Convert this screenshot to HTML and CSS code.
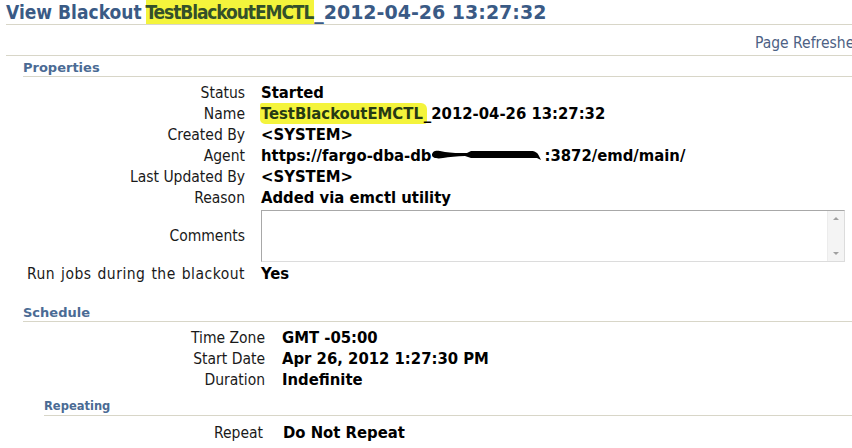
FILE: index.html
```html
<!DOCTYPE html>
<html>
<head>
<meta charset="utf-8">
<link rel="stylesheet" href="styles.css">
</head>
<body>
<div class="page">
  <h1 class="title">View Blackout <span class="hl">TestBlackoutEMCTL</span><span class="wide">_2012-04-26 13:27:32</span></h1>
  <div class="refresh-bar"><span class="refresh">Page Refreshed</span></div>

  <section class="section">
    <h2 class="sec-head">Properties</h2>
    <div class="grid props">
      <div class="lbl">Status</div><div class="val">Started</div>
      <div class="lbl">Name</div><div class="val"><span class="hl mark">TestBlackoutEMCTL</span>_2012-04-26 13:27:32</div>
      <div class="lbl">Created By</div><div class="val">&lt;SYSTEM&gt;</div>
      <div class="lbl">Agent</div><div class="val">https://fargo-dba-db<svg class="redact" width="113" height="14" viewBox="0 0 113 14"><path d="M1 7 C1 3 5 2 9 3 L14 4 C20 5 28 5 36 5 L40 3 L100 3 C104 3 107 5 108 8 L110 12 L106 10 L100 10 L40 10 L34 8 C26 8 18 9 12 10 C6 11 1 10 1 7 Z" fill="#000"/></svg>:3872/emd/main/</div>
      <div class="lbl">Last Updated By</div><div class="val">&lt;SYSTEM&gt;</div>
      <div class="lbl">Reason</div><div class="val">Added via emctl utility</div>
      <div class="lbl">Comments</div>
      <div class="val"><div class="textarea"><div class="scroll"><span class="arr up"></span><span class="arr down"></span></div></div></div>
      <div class="lbl lbl-long">Run jobs during the blackout</div><div class="val">Yes</div>
    </div>
  </section>

  <section class="section sched">
    <h2 class="sec-head">Schedule</h2>
    <div class="grid sched-grid">
      <div class="lbl">Time Zone</div><div class="val">GMT -05:00</div>
      <div class="lbl">Start Date</div><div class="val">Apr 26, 2012 1:27:30 PM</div>
      <div class="lbl">Duration</div><div class="val">Indefinite</div>
    </div>
    <section class="sub">
      <h3 class="sub-head">Repeating</h3>
      <div class="grid rep-grid">
        <div class="lbl">Repeat</div><div class="val">Do Not Repeat</div>
      </div>
    </section>
  </section>
</div>
</body>
</html>
```

FILE: styles.css
```css
html, body {
  margin: 0;
  padding: 0;
  background: #ffffff;
}
body {
  width: 852px;
  height: 448px;
  overflow: hidden;
  font-family: "DejaVu Sans Condensed", "DejaVu Sans", sans-serif;
  color: #000;
}
.page {
  padding-left: 6px;
  width: 846px;
  overflow: hidden;
}
.title {
  margin: 0;
  padding-top: 1px;
  font-size: 19px;
  line-height: 23px;
  font-weight: bold;
  color: #3a5a85;
  border-bottom: 1px solid #d8d6c8;
  white-space: nowrap;
}
.title .wide {
  font-family: "DejaVu Sans", sans-serif;
  font-size: 19px;
}
.hl {
  background: #f4f43c;
  color: #263a14;
}
.title .hl {
  color: #34502a;
  padding: 1px 1px 1px 0;
  letter-spacing: -1.1px;
  margin-left: -2px;
}
.mark {
  border-radius: 2px 6px 3px 5px;
  padding: 1px 4px 1px 1px;
  margin-left: -1px;
  margin-right: -3px;
}
.refresh-bar {
  height: 31px;
  border-bottom: 1px solid #d8d6c8;
  padding-left: 749px;
  box-sizing: border-box;
  padding-top: 8px;
  overflow: hidden;
  white-space: nowrap;
}
.refresh {
  font-size: 15.5px;
  color: #4d6184;
}
.section {
  margin-left: 17px;
}
.sec-head {
  margin: 4px 0 0 0;
  font-family: "DejaVu Sans", sans-serif;
  font-size: 13px;
  line-height: 15px;
  font-weight: bold;
  color: #4b6b94;
  border-bottom: 1px solid #d8d6c8;
  padding-bottom: 1px;
}
.grid {
  display: grid;
  column-gap: 16px;
  grid-auto-rows: 21px;
  align-items: center;
}
.props {
  grid-template-columns: 222px 1fr;
  grid-template-rows: repeat(6, 21px) 55px 21px;
  margin-top: 5px;
}
.lbl {
  text-align: right;
  white-space: nowrap;
  color: #1a1a1a;
  font-size: 15.5px;
}
.lbl-long {
  letter-spacing: 0.5px;
  word-spacing: 1px;
}
.val {
  font-weight: bold;
  white-space: nowrap;
  font-size: 16.5px;
}
.textarea {
  width: 582px;
  height: 50px;
  border: 1px solid #a8a8a8;
  border-bottom-color: #dcdcdc;
  border-right-color: #dcdcdc;
  box-sizing: content-box;
  display: flex;
  justify-content: flex-end;
}
.scroll {
  width: 16px;
  background: #f4f4f4;
  border-left: 1px solid #ececec;
  position: relative;
}
.arr {
  position: absolute;
  left: 5px;
  width: 0;
  height: 0;
  border-left: 3px solid transparent;
  border-right: 3px solid transparent;
}
.arr.up {
  top: 6px;
  border-bottom: 3px solid #a0a0a0;
}
.arr.down {
  bottom: 6px;
  border-top: 3px solid #a0a0a0;
}
.redact {
  display: inline-block;
  vertical-align: -1px;
}
.sched {
  margin-top: 21px;
}
.sched-grid {
  grid-template-columns: 242px 1fr;
  column-gap: 17px;
  margin-top: 5px;
}
.sub {
  margin-left: 21px;
  margin-top: 9px;
}
.sub-head {
  margin: 0;
  font-family: "DejaVu Sans", sans-serif;
  font-size: 11.5px;
  line-height: 15px;
  font-weight: bold;
  color: #4b6b94;
  border-bottom: 1px solid #d8d6c8;
  padding-bottom: 1px;
}
.rep-grid {
  grid-template-columns: 219px 1fr;
  column-gap: 20px;
  margin-top: 6px;
}
```
